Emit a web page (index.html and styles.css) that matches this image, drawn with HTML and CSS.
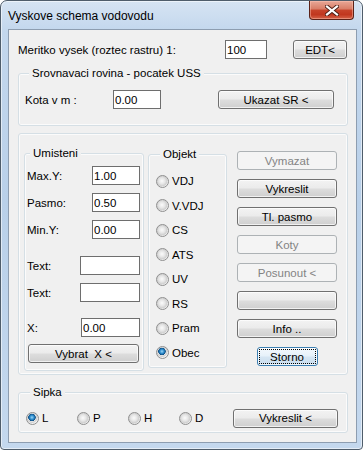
FILE: index.html
```html
<!DOCTYPE html>
<html lang="cs">
<head>
    <meta charset="UTF-8">
    <meta name="viewport" content="width=device-width, initial-scale=1.0">
    <title>Vyskove schema vodovodu</title>
    <link rel="stylesheet" href="styles.css">
</head>
<body>
    <div class="window">
        <div class="titlebar">
            <span class="title">Vyskove schema vodovodu</span>
            <button class="close" title="Zavrit">
                <svg width="14" height="11" viewBox="0 0 14 11">
                    <path d="M2 1.5 L12 9.5 M12 1.5 L2 9.5" stroke="#4a1d14" stroke-width="4" stroke-linecap="square"/>
                    <path d="M2 1.5 L12 9.5 M12 1.5 L2 9.5" stroke="#ffffff" stroke-width="2.2" stroke-linecap="square"/>
                </svg>
            </button>
        </div>

        <div class="client">
            <div class="row scale-row">
                <span class="scale-label">Meritko vysek (roztec rastru) 1:</span>
                <input type="text" class="edit edit-scale" value="100">
                <button class="button btn-edt">EDT&lt;</button>
            </div>

            <!-- Srovnavaci rovina -->
            <div class="group group-ss">
                <span class="legend">Srovnavaci rovina - pocatek USS</span>
                <div class="row kota-row">
                    <span class="kota-label">Kota v m :</span>
                    <input type="text" class="edit edit-kota" value="0.00">
                    <button class="button btn-ukazat">Ukazat SR &lt;</button>
                </div>
            </div>

            <div class="group group-main">
                <!-- Umisteni -->
                <div class="group umisteni">
                    <span class="legend">Umisteni</span>
                    <div class="row field first">
                        <span>Max.Y:</span>
                        <input type="text" class="edit edit-num" value="1.00">
                    </div>
                    <div class="row field">
                        <span>Pasmo:</span>
                        <input type="text" class="edit edit-num" value="0.50">
                    </div>
                    <div class="row field">
                        <span>Min.Y:</span>
                        <input type="text" class="edit edit-num" value="0.00">
                    </div>
                    <div class="row field spaced">
                        <span>Text:</span>
                        <input type="text" class="edit edit-text" value="">
                    </div>
                    <div class="row field">
                        <span>Text:</span>
                        <input type="text" class="edit edit-text" value="">
                    </div>
                    <div class="row field spaced">
                        <span>X:</span>
                        <input type="text" class="edit edit-x" value="0.00">
                    </div>
                    <button class="button btn-vybrat">Vybrat&nbsp; X &lt;</button>
                </div>

                <!-- Objekt -->
                <div class="group objekt">
                    <span class="legend">Objekt</span>
                    <div class="radio-list">
                        <label class="radio-item"><input type="radio" name="objekt"> VDJ</label>
                        <label class="radio-item"><input type="radio" name="objekt"> V.VDJ</label>
                        <label class="radio-item"><input type="radio" name="objekt"> CS</label>
                        <label class="radio-item"><input type="radio" name="objekt"> ATS</label>
                        <label class="radio-item"><input type="radio" name="objekt"> UV</label>
                        <label class="radio-item"><input type="radio" name="objekt"> RS</label>
                        <label class="radio-item"><input type="radio" name="objekt"> Pram</label>
                        <label class="radio-item"><input type="radio" name="objekt" checked> Obec</label>
                    </div>
                </div>

                <div class="actions">
                    <button class="button" disabled>Vymazat</button>
                    <button class="button">Vykreslit</button>
                    <button class="button">Tl. pasmo</button>
                    <button class="button" disabled>Koty</button>
                    <button class="button" disabled>Posunout &lt;</button>
                    <button class="button"></button>
                    <button class="button">Info ..</button>
                    <button class="button btn-storno">Storno</button>
                </div>
            </div>

            <!-- Sipka -->
            <div class="group sipka">
                <span class="legend">Sipka</span>
                <div class="row sipka-row">
                    <label class="radio-item"><input type="radio" name="sipka" checked> L</label>
                    <label class="radio-item"><input type="radio" name="sipka"> P</label>
                    <label class="radio-item"><input type="radio" name="sipka"> H</label>
                    <label class="radio-item"><input type="radio" name="sipka"> D</label>
                    <button class="button btn-sipka">Vykreslit &lt;</button>
                </div>
            </div>
        </div>
    </div>
</body>
</html>
```

FILE: styles.css
```css
body {
    margin: 0;
    padding: 0;
    background: #ffffff;
    font-family: "Liberation Sans", Arial, sans-serif;
    font-size: 11.5px;
    color: #000000;
}

/* Okno */
.window {
    width: 363px;
    height: 450px;
    box-sizing: border-box;
    padding: 0 7px 7px 7px;
    border: 1px solid #4f5d6b;
    border-radius: 7px 7px 4px 4px;
    background: linear-gradient(180deg, #d6e4f3 0, #c3d7ed 30px, #b9d0e9 200px, #c4d8ee 100%);
    box-shadow: inset 0 0 0 1px rgba(255, 255, 255, 0.55);
}

.titlebar {
    display: flex;
    align-items: flex-start;
    height: 28px;
}

.title {
    font-size: 12px;
    line-height: 14px;
    margin: 8px 0 0 0;
    color: #000000;
}

.close {
    margin-left: auto;
    margin-right: 1px;
    width: 45px;
    height: 19px;
    padding: 0;
    border: 1px solid #5b2218;
    border-top: none;
    border-radius: 0 0 4px 4px;
    background: linear-gradient(180deg, #e8a897 0, #d87c66 45%, #c7442b 50%, #c1371f 75%, #d46248 100%);
    box-shadow: inset 0 0 0 1px rgba(255, 200, 185, 0.45);
    display: flex;
    align-items: center;
    justify-content: center;
}

.client {
    width: 349px;
    height: 414px;
    box-sizing: border-box;
    border: 1px solid #8d9db0;
    background: #f0f0f0;
    padding: 10px 8px 0 9px;
}

.row {
    display: flex;
    align-items: center;
}

/* Ovladaci prvky */
.edit {
    box-sizing: border-box;
    height: 19px;
    margin: 0;
    padding: 0 1px;
    border: 1px solid #6e6e6e;
    background: #ffffff;
    font-family: inherit;
    font-size: 11.5px;
    color: #000000;
    outline: none;
}

.button {
    box-sizing: border-box;
    height: 19px;
    margin: 0;
    padding: 0;
    border: 1px solid #707070;
    border-radius: 3px;
    background: linear-gradient(180deg, #f3f3f3 0, #ebebeb 48%, #dddddd 52%, #cfcfcf 100%);
    box-shadow: inset 0 0 0 1px rgba(255, 255, 255, 0.7);
    font-family: inherit;
    font-size: 11.5px;
    color: #000000;
    text-align: center;
}

.button:disabled {
    border-color: #adb2b5;
    background: #f4f4f4;
    box-shadow: none;
    color: #838383;
}

input[type="radio"] {
    appearance: none;
    -webkit-appearance: none;
    width: 13px;
    height: 13px;
    margin: 0 3px 0 0;
    border: 1px solid #8f8f8f;
    border-radius: 50%;
    background: radial-gradient(circle at 45% 45%, #fbfbfb 0, #e6e6e6 3px, #cfcfcf 5px, #f2f2f2 6px);
    flex: none;
}

input[type="radio"]:checked {
    background: radial-gradient(circle at 45% 40%, #9fd6f5 0, #2f8fcf 2px, #0f4f85 3.5px, #e4e4e4 4px, #cfcfcf 5px, #f2f2f2 6px);
}

.radio-item {
    display: flex;
    align-items: center;
}

/* Skupiny */
.group {
    box-sizing: border-box;
    border: 1px solid #d5dfe5;
    border-radius: 3px;
    box-shadow: inset 0 0 0 1px #fbfbfb;
}

.legend {
    display: block;
    width: fit-content;
    margin: -8px 0 0 4px;
    padding: 0 3px;
    line-height: 14px;
    background: #f0f0f0;
}

.scale-row {
    height: 19px;
}

.scale-label {
    width: 207px;
}

.edit-scale {
    width: 42px;
}

.btn-edt {
    width: 54px;
    margin-left: 26px;
}

.group-ss {
    margin-top: 14px;
    height: 53px;
    padding-left: 6px;
}

.kota-row {
    margin-top: 10px;
}

.kota-label {
    width: 88px;
}

.edit-kota {
    width: 48px;
}

.btn-ukazat {
    width: 116px;
    margin-left: 57px;
}

.group-main {
    margin-top: 7px;
    height: 242px;
    display: flex;
    align-items: flex-start;
}

/* Umisteni */
.umisteni {
    margin: 19px 0 0 5px;
    width: 120px;
    height: 218px;
    padding: 0 3px 0 2px;
}

.umisteni .legend {
    margin-left: 3px;
}

.field {
    justify-content: space-between;
    height: 19px;
    margin-top: 8px;
}

.field.first {
    margin-top: 6px;
}

.field.spaced {
    margin-top: 17px;
}

.field + .field.spaced:last-of-type {
    margin-top: 16px;
}

.edit-num {
    width: 48px;
}

.edit-text {
    width: 60px;
}

.edit-x {
    width: 59px;
}

.btn-vybrat {
    display: block;
    width: 111px;
    margin: 7px 0 0 1px;
}

/* Objekt */
.objekt {
    margin: 20px 0 0 4px;
    width: 79px;
    height: 214px;
    padding-left: 7px;
}

.radio-list {
    margin-top: 8px;
}

.radio-list .radio-item {
    height: 24.5px;
}

.actions {
    margin: 17px 0 0 10px;
    width: 100px;
    display: flex;
    flex-direction: column;
    gap: 9px;
}

.actions .button {
    width: 100px;
}

.actions .btn-storno {
    width: 61px;
    align-self: center;
    border-color: #3c7fb1;
    background: linear-gradient(180deg, #f4f9fd 0, #e6f1fa 48%, #d6e6f3 52%, #c9ddee 100%);
    outline: 1px dotted #000000;
    outline-offset: -3px;
}

/* Sipka */
.sipka {
    margin-top: 17px;
    height: 41px;
    padding: 0 9px 0 7px;
}

.sipka-row {
    margin-top: 9px;
    height: 20px;
}

.sipka-row .radio-item {
    width: 51px;
}

.btn-sipka {
    width: 105px;
    margin-left: auto;
}
```
